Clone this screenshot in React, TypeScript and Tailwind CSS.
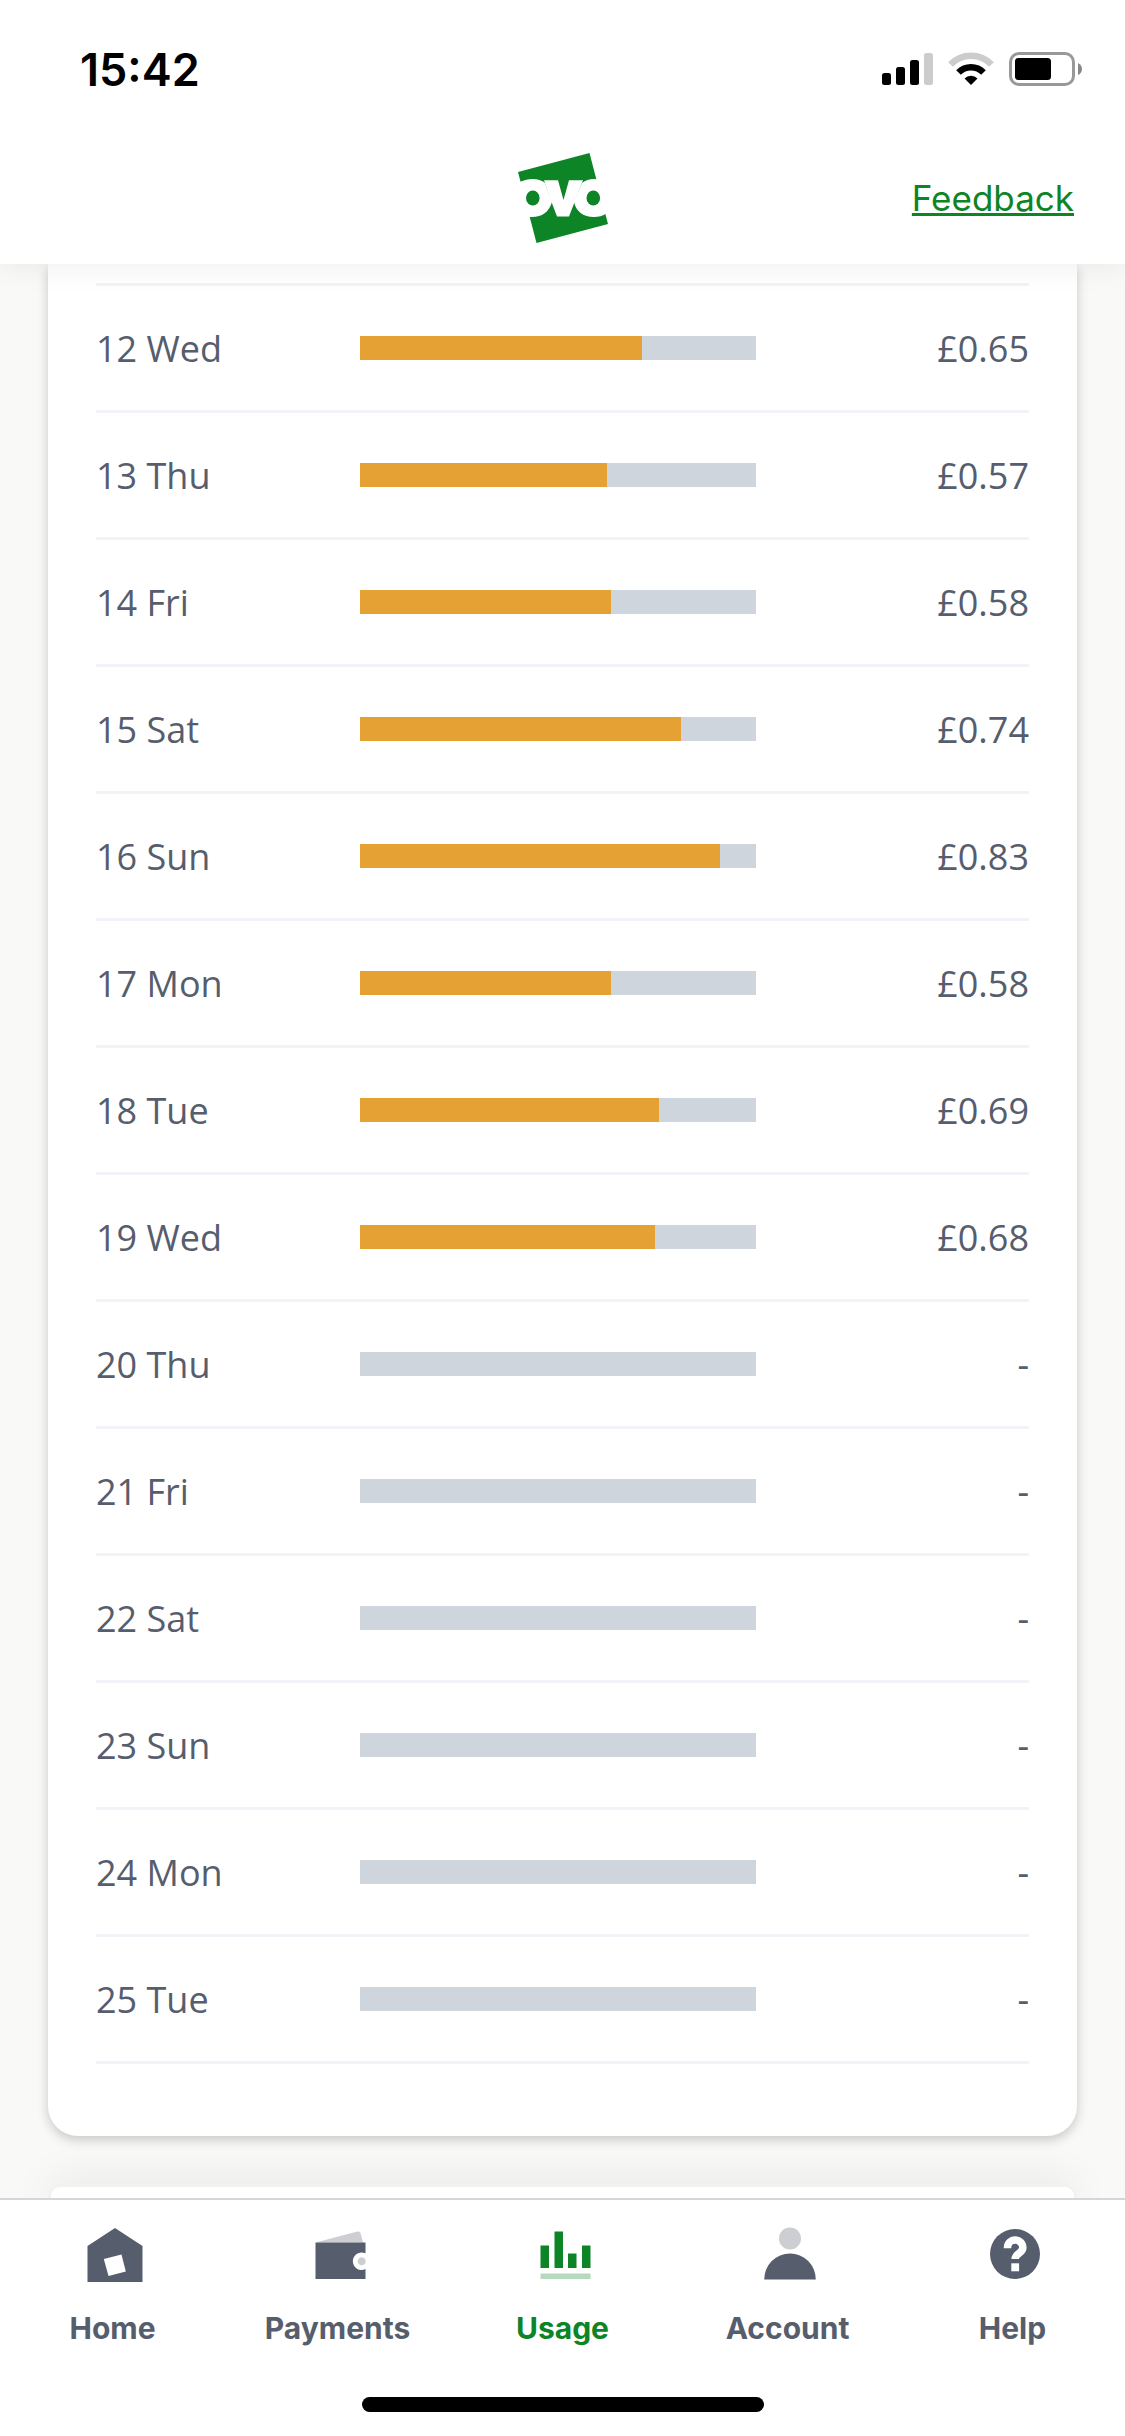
import React from "react";

type Day = {
  label: string;
  cost: number | null;
  width: number;
};

// width is the filled part of the bar, in percent
const days: Day[] = [
  { label: "12 Wed", cost: 0.65, width: 71.2 },
  { label: "13 Thu", cost: 0.57, width: 62.4 },
  { label: "14 Fri", cost: 0.58, width: 63.4 },
  { label: "15 Sat", cost: 0.74, width: 81.1 },
  { label: "16 Sun", cost: 0.83, width: 90.9 },
  { label: "17 Mon", cost: 0.58, width: 63.4 },
  { label: "18 Tue", cost: 0.69, width: 75.5 },
  { label: "19 Wed", cost: 0.68, width: 74.5 },
  { label: "20 Thu", cost: null, width: 0 },
  { label: "21 Fri", cost: null, width: 0 },
  { label: "22 Sat", cost: null, width: 0 },
  { label: "23 Sun", cost: null, width: 0 },
  { label: "24 Mon", cost: null, width: 0 },
  { label: "25 Tue", cost: null, width: 0 },
];

const HomeIcon = () => (
  <svg className="ml-1 h-16 w-16" viewBox="0 0 64 64">
    <path d="M32 6 59.500 24V60H4.500V24Z" fill="#565d6d" />
    <path d="M20.800 37 38.500 32.500 42.800 49.500 25.500 54Z" fill="#fff" />
  </svg>
);

const PaymentsIcon = () => (
  <svg className="ml-1 h-16 w-16" viewBox="0 0 64 64">
    <path d="M7.500 20.500 49.500 9.500Q52 9 52.500 11L55 20.500Z" fill="#ccced2" />
    <path d="M7.500 20.500H57.500V31.300A8.800 8.800 0 1 0 57.500 47.100V57H7.500Z" fill="#565d6d" />
    <path d="M57.500 38A4 4 0 1 0 57.500 40.400Z" fill="#ccced2" />
  </svg>
);

const UsageIcon = () => (
  <svg className="ml-1 h-16 w-16" viewBox="0 0 64 64" fill="#0d8426">
    <path d="M7.500 23.500H16V46H7.500ZM21.500 9.500H30V46H21.500ZM35 31.500H43.500V46H35ZM49 23.500H57.500V46H49Z" />
    <path d="M7.500 51.500H57.500V57H7.500Z" fill="#b6dabd" />
  </svg>
);

const AccountIcon = () => (
  <svg className="ml-1 h-16 w-16" viewBox="0 0 64 64">
    <circle cx="32" cy="16.500" r="11" fill="#ccced2" />
    <path d="M6.200 57.500a25.800 26 0 0 1 51.600 0Z" fill="#565d6d" />
  </svg>
);

const HelpIcon = () => (
  <svg className="ml-1 h-16 w-16" viewBox="0 0 64 64">
    <circle cx="32" cy="32" r="25" fill="#565d6d" />
    <path
      d="M24.500 26.200V25.700A7.650 7.650 0 0 1 39.800 25.700C39.800 31.500 32.200 31 32.200 37"
      fill="none"
      stroke="#fff"
      strokeWidth="7.600"
    />
    <path d="M28.300 41.300H36.100V49.300H28.300Z" fill="#fff" />
  </svg>
);

const navItems = [
  { label: "Home", icon: HomeIcon, active: false },
  { label: "Payments", icon: PaymentsIcon, active: false },
  { label: "Usage", icon: UsageIcon, active: true },
  { label: "Account", icon: AccountIcon, active: false },
  { label: "Help", icon: HelpIcon, active: false },
];

const StatusBar = () => (
  <div className="flex h-[138px] items-center justify-between pr-[42px] pl-20">
    <span className="text-[45px] leading-none font-semibold text-black">15:42</span>
    <svg className="h-9 w-[202px]" viewBox="0 0 202 36">
      <rect x="1" y="22" width="9" height="12" rx="2.500" />
      <rect x="15" y="16" width="9" height="18" rx="2.500" />
      <rect x="29" y="9" width="9" height="25" rx="2.500" />
      <rect x="43" y="2" width="9" height="32" rx="2.500" fill="#ccc" />
      <path d="M69.500 13.500A28.500 28.500 0 0 1 110.500 13.500" fill="none" stroke="#ccc" strokeWidth="6.500" />
      <path d="M77.500 21.500A17.500 17.500 0 0 1 102.500 21.500" fill="none" stroke="#000" strokeWidth="6.500" />
      <path d="M83.500 27.500A9 9 0 0 1 96.500 27.500L90 34Z" />
      <rect x="129.500" y="2.500" width="63" height="31" rx="8.500" fill="none" stroke="#999" strokeWidth="3" />
      <rect x="134" y="7" width="36" height="22" rx="3.500" />
      <path d="M197 12Q201 14 201 18T197 24Z" fill="#888" />
    </svg>
  </div>
);

const Logo = () => (
  <svg className="h-[90px] w-[90px]" viewBox="0 0 90 90" role="img" aria-label="OVO">
    <path d="M0 19 71.500 0 90 71 18.500 90Z" fill="#0d8426" />
    {/* left ring */}
    <path d="M-1 30.500Q7 26 14.500 26Q22 26 27 30L34 49C31 59 24 64 14 64H-1Z" fill="#fff" />
    {/* middle wedge */}
    <path d="M26 27.300H40L45.500 47 51 27.300H65L51 63.500H39L33.500 49Z" fill="#fff" />
    {/* right ring */}
    <path d="M64 30Q69 26 76 26Q84 26 91 29V60.500L87.500 61Q83 64 76 64C65 64 58 58 56 49Z" fill="#fff" />
    <ellipse cx="14.800" cy="45" rx="6.800" ry="7.500" fill="#0d8426" />
    <ellipse cx="75.300" cy="45" rx="6.800" ry="7.500" fill="#0d8426" />
  </svg>
);

const App: React.FC = () => {
  return (
    <div className="flex min-h-screen flex-col bg-[#f9f9f7] font-[Inter,sans-serif]">
      <header className="relative z-10 bg-white shadow-[0_0_30px_rgba(0,0,0,0.08)]">
        <StatusBar />
        <div className="grid h-[126px] grid-cols-3 items-center px-[51px] pb-1.5">
          <div className="col-start-2 flex justify-center">
            <Logo />
          </div>
          <a
            href="#feedback"
            className="justify-self-end text-[35px] text-[#0d8426] underline decoration-[3px] underline-offset-2"
          >
            Feedback
          </a>
        </div>
      </header>

      <main className="flex-1 px-12">
        <section className="rounded-b-[30px] bg-white px-12 pt-[19px] pb-[72px] shadow-[0_4px_12px_rgba(0,0,0,0.2)]">
          <table className="w-full table-fixed border-t-[3px] border-[#f2f2f8] font-['Open_Sans',sans-serif] text-4xl text-[#565d6d]">
            <tbody>
              {days.map((day) => (
                <tr key={day.label} className="h-[127px] border-b-[3px] border-[#f2f2f8]">
                  <th scope="row" className="w-[264px] p-0 pt-0.5 text-left font-normal">
                    {day.label}
                  </th>
                  <td className="p-0">
                    <div className="h-6 bg-[#ced5dd]">
                      <div className="h-full bg-[#e5a133]" style={{ width: `${day.width}%` }} />
                    </div>
                  </td>
                  <td className="w-[273px] p-0 pt-0.5 text-right">
                    {day.cost === null ? "-" : `£${day.cost.toFixed(2)}`}
                  </td>
                </tr>
              ))}
            </tbody>
          </table>
        </section>
        <section className="mt-12 h-[14px] rounded-t-xl border-3 border-b-0 border-[#f2f2f2] bg-white shadow-[0_0_40px_rgba(0,0,0,0.14)]" />
      </main>

      <footer className="relative z-10 border-t-2 border-[#d6d6d6] bg-white">
        <nav className="grid grid-cols-5 pt-[22px]">
          {navItems.map(({ label, icon: Icon, active }) => (
            <a
              key={label}
              href={`#${label.toLowerCase()}`}
              className={`flex flex-col items-center gap-6 text-3xl font-bold ${
                active ? "text-[#0d8426]" : "text-[#565d6d]"
              }`}
            >
              <Icon />
              {label}
            </a>
          ))}
        </nav>
        <div className="flex justify-center pt-[51px] pb-6">
          <div className="h-[15px] w-[402px] rounded-full bg-black" />
        </div>
      </footer>
    </div>
  );
};

export default App;
